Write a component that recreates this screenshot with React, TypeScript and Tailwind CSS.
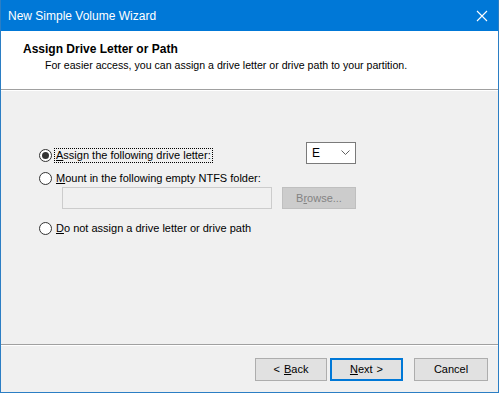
import React from 'react';

function Radio({ checked }: { checked?: boolean }) {
  return (
    <span className="w-[13px] h-[13px] rounded-full border border-[#333333] bg-white flex items-center justify-center shrink-0">
      {checked && <span className="w-[7px] h-[7px] rounded-full bg-[#333333]" />}
    </span>
  );
}

function Btn({ children, primary, w }: { children: React.ReactNode; primary?: boolean; w: string }) {
  return (
    <div
      className={
        w + ' h-[23px] flex items-center justify-center bg-[#e1e1e1] text-black ' +
        (primary ? 'border-2 border-[#0078d7]' : 'border border-[#adadad]')
      }
    >
      {children}
    </div>
  );
}

export default function App() {
  return (
    <div
      className="w-[499px] h-[393px] flex flex-col border-x border-b border-[#2b7ec4] bg-[#f0f0f0] text-[11px] text-black overflow-hidden"
      style={{ fontFamily: '"Liberation Sans", Arial, sans-serif' }}
    >
      {/* title bar */}
      <div className="h-[31px] shrink-0 bg-[#0078d7] flex items-center justify-between pl-[8px] pr-[10px] -mx-px">
        <span className="text-white text-[12px]">New Simple Volume Wizard</span>
        <svg width="12" height="12" viewBox="0 0 12 12" className="mr-[1px]">
          <path d="M1 1 L11 11 M11 1 L1 11" stroke="white" strokeWidth="1.1" />
        </svg>
      </div>

      {/* header */}
      <div className="h-[59px] shrink-0 bg-white pl-[22px] pt-[10px] border-b border-[#a0a0a0]">
        <div className="font-bold text-[12px] leading-[16px]">Assign Drive Letter or Path</div>
        <div className="pl-[22px] text-[10.6px] leading-[14px] mt-[1px]">
          For easier access, you can assign a drive letter or drive path to your partition.
        </div>
      </div>
      <div className="h-px shrink-0 bg-white" />

      {/* body */}
      <div className="flex-1 flex flex-col pl-[38px] pt-[51px]">
        <div className="flex items-start h-[22px]">
          <div className="flex items-center h-[14px] mt-[6px]">
            <Radio checked />
            <span className="ml-[2px] px-px border border-dotted border-black leading-[13px]">
              <u>A</u>ssign the following drive letter:
            </span>
          </div>
          <div className="ml-auto mr-[142px] w-[50px] h-[22px] bg-white border border-[#7a7a7a] flex items-center justify-between pl-[5px] pr-[5px]">
            <span className="text-[12px]">E</span>
            <svg width="9" height="6" viewBox="0 0 9 6">
              <path d="M0.5 0.5 L4.5 4.5 L8.5 0.5" stroke="#606060" strokeWidth="1" fill="none" />
            </svg>
          </div>
        </div>
        <div className="flex items-center h-[14px] mt-[7px]">
          <Radio />
          <span className="ml-[4px]">
            <u>M</u>ount in the following empty NTFS folder:
          </span>
        </div>
        <div className="flex items-center mt-[2px] pl-[23px]">
          <div className="w-[210px] h-[22px] bg-[#f0f0f0] border border-[#cccccc]" />
          <div className="ml-[10px] w-[74px] h-[22px] bg-[#cccccc] border border-[#bfbfbf] text-[#838383] flex items-center justify-center">
            B<u>r</u>owse...
          </div>
        </div>
        <div className="flex items-center h-[14px] mt-[12px]">
          <Radio />
          <span className="ml-[4px]">
            <u>D</u>o not assign a drive letter or drive path
          </span>
        </div>
      </div>

      {/* footer */}
      <div className="h-px shrink-0 bg-[#a0a0a0]" />
      <div className="h-px shrink-0 bg-white" />
      <div className="h-[46px] shrink-0 flex items-start pt-[12px] pl-[254px]">
        <Btn w="w-[72px]">
          <span>&lt;</span>
          <span className="ml-[4px]">
            <u>B</u>ack
          </span>
        </Btn>
        <div className="ml-[3px]">
          <Btn primary w="w-[73px]">
            <span>
              <u>N</u>ext
            </span>
            <span className="ml-[4px]">&gt;</span>
          </Btn>
        </div>
        <div className="ml-[11px]">
          <Btn w="w-[74px]">Cancel</Btn>
        </div>
      </div>
    </div>
  );
}
